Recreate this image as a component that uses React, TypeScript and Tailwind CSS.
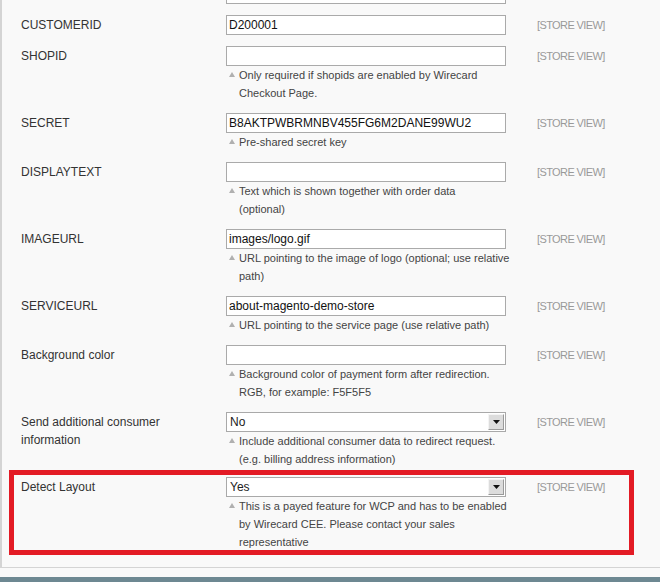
type Row = {
  label?: string;
  value?: string;
  select?: boolean;
  note?: string[];
  partial?: boolean;
  highlight?: boolean;
  tight?: boolean;
};

const ROWS: Row[] = [
  { partial: true, value: "" },
  { label: "CUSTOMERID", value: "D200001" },
  {
    label: "SHOPID",
    value: "",
    note: ["Only required if shopids are enabled by Wirecard", "Checkout Page."],
  },
  {
    label: "SECRET",
    value: "B8AKTPWBRMNBV455FG6M2DANE99WU2",
    note: ["Pre-shared secret key"],
  },
  {
    label: "DISPLAYTEXT",
    value: "",
    note: ["Text which is shown together with order data", "(optional)"],
  },
  {
    label: "IMAGEURL",
    value: "images/logo.gif",
    note: ["URL pointing to the image of logo (optional; use relative", "path)"],
  },
  {
    label: "SERVICEURL",
    value: "about-magento-demo-store",
    note: ["URL pointing to the service page (use relative path)"],
  },
  {
    label: "Background color",
    value: "",
    note: [
      "Background color of payment form after redirection.",
      "RGB, for example: F5F5F5",
    ],
  },
  {
    label: "Send additional consumer information",
    value: "No",
    select: true,
    tight: true,
    note: [
      "Include additional consumer data to redirect request.",
      "(e.g. billing address information)",
    ],
  },
  {
    label: "Detect Layout",
    value: "Yes",
    select: true,
    highlight: true,
    note: [
      "This is a payed feature for WCP and has to be enabled",
      "by Wirecard CEE. Please contact your sales",
      "representative",
    ],
  },
];

function SelectBox({ value }: { value: string }) {
  return (
    <div className="flex h-[20px] w-[280px] items-center justify-between border border-[#a9a9a9] bg-white pl-[3px] pr-[1px] text-[12px] text-[#222]">
      <span>{value}</span>
      <span className="flex h-[16px] w-[16px] items-center justify-center border border-t-[#f4f4f4] border-l-[#f4f4f4] border-b-[#9a9a9a] border-r-[#9a9a9a] bg-[#dcdcdc]">
        <svg width="7" height="4" viewBox="0 0 7 4">
          <polygon points="0,0 7,0 3.5,4" fill="#111" />
        </svg>
      </span>
    </div>
  );
}

export default function App() {
  return (
    <div className="h-[582px] w-[660px] overflow-hidden bg-[#f9f9f9] font-['Liberation_Sans',Arial,sans-serif]">
      <div className="border-b border-l-2 border-[#d4d4d4]">
        {ROWS.map((r, i) => (
          <div
            key={i}
            className={
              "relative flex " +
              (r.partial ? "-mt-[16px] " : "") +
              (r.highlight ? "pb-[16px]" : r.tight ? "pb-[9px]" : "pb-[11px]")
            }
          >
            {/* annotation box */}
            {r.highlight && (
              <div className="pointer-events-none absolute top-[-7px] left-[7px] h-[85px] w-[625px] border-[5px] border-[#e31b25]" />
            )}
            <div className="w-[224px] pl-[19px] pr-[20px] pt-[1px] text-[12px] leading-[18px] text-[#333]">
              {r.label}
            </div>
            <div className="w-[280px]">
              {r.select ? (
                <SelectBox value={r.value ?? ""} />
              ) : (
                <input
                  readOnly
                  value={r.value}
                  className="block h-[20px] w-[280px] border border-[#aaaaaa] bg-white px-[2px] text-[12px] text-[#111] outline-none"
                />
              )}
              {r.note && (
                <div className="relative pl-[13px] text-[11px] leading-[18px] text-[#444]">
                  <svg
                    width="6"
                    height="5"
                    viewBox="0 0 6 5"
                    className="absolute left-[3px] top-[6px]"
                  >
                    <polygon points="3,0 6,5 0,5" fill="#b0b0b0" />
                  </svg>
                  {r.note.map((line) => (
                    <div key={line} className="whitespace-nowrap">
                      {line}
                    </div>
                  ))}
                </div>
              )}
            </div>
            {!r.partial && (
              <div className="pl-[31px] pt-[1px] text-[11px] leading-[18px] tracking-[-0.6px] whitespace-nowrap text-[#999]">
                [STORE VIEW]
              </div>
            )}
          </div>
        ))}
      </div>
      <div className="h-[9px]" />
      <div className="h-[40px] bg-[#6d8892]" />
    </div>
  );
}
